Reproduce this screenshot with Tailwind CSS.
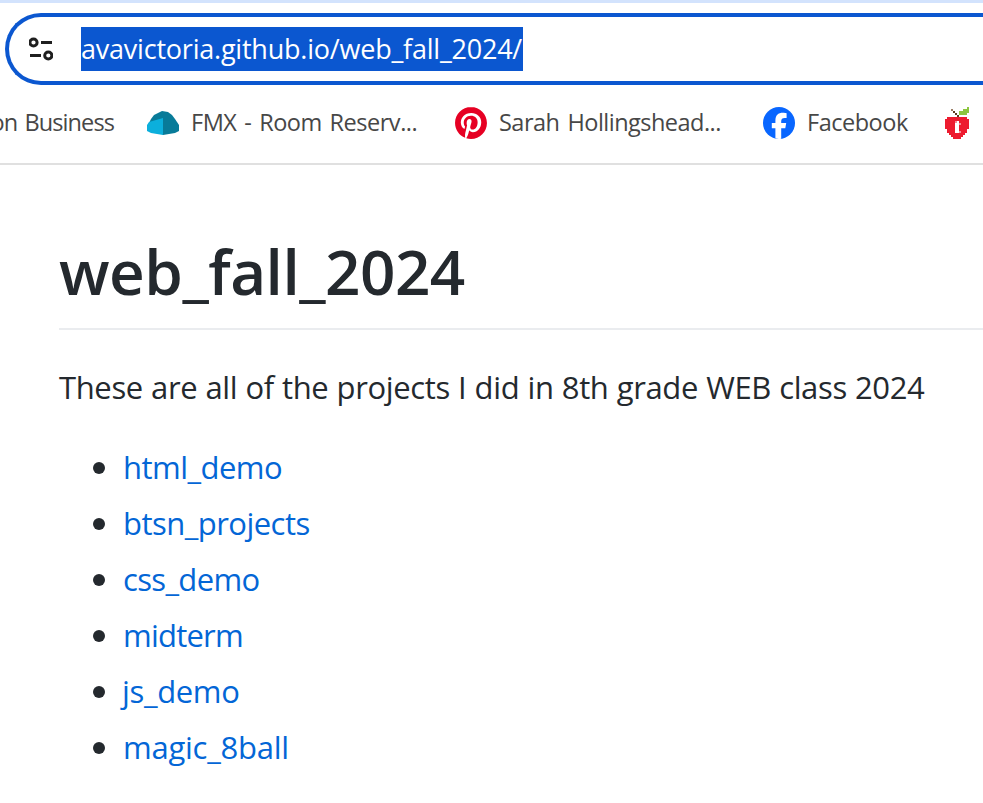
<!DOCTYPE html>
<html lang="en">
<head>
<meta charset="utf-8">
<title>web_fall_2024</title>
<script src="https://cdn.jsdelivr.net/npm/@tailwindcss/browser@4"></script>
</head>
<body class="h-[803px] overflow-hidden bg-white font-['Open_Sans','Noto_Sans',sans-serif] whitespace-nowrap">
<header class="flex h-[165px] flex-col border-b-2 border-[#e0e0e0]">
  <div class="h-[3px] shrink-0 bg-[#d3e3fd]"></div>
  <div class="mt-2.5 ml-[5px] flex h-[72px] shrink-0 items-center rounded-l-full border-4 border-r-0 border-[#0b57d0] pl-5">
    <svg class="size-6 shrink-0" viewBox="0 0 24 24" fill="none" stroke="#1f1f1f" stroke-width="3">
      <circle cx="4.5" cy="5.5" r="3.6"/><path d="M12 5.5h11M1 18.5h11"/><circle cx="19.3" cy="18.5" r="3.6"/>
    </svg>
    <span class="ml-7 h-11 w-[442px] bg-[#0b57d0] text-[27px] leading-[43px] tracking-[-0.22px] text-white">avavictoria.github.io/web_fall_2024/</span>
  </div>
  <nav class="mt-[22px] flex h-8 items-center text-[23.5px] leading-[30px] text-[#474747]">
    <div class="flex w-[114px] shrink-0 justify-end pb-0.5"><span class="tracking-[-0.9px] [word-spacing:2px]">on Business</span></div>
    <div class="ml-[33px] flex w-[308px] shrink-0 items-center gap-3">
      <svg class="size-8 shrink-0" viewBox="0 0 32 32">
        <path d="M2 16L4 12L7 8L11 6L15 4L21 5L25 8L28 12L30 15L32 18V24L28 26L16 28Z" fill="#087b99"/>
        <path d="M2 15L16 11V28L10 27L4 26L0 24V18Z" fill="#0cafdc"/>
      </svg>
      <span class="pb-0.5 tracking-[-0.48px] [word-spacing:2.2px]">FMX - Room Reserv...</span>
    </div>
    <div class="flex w-[308px] shrink-0 items-center gap-3">
      <svg class="size-8 shrink-0" viewBox="0 0 24 24"><circle cx="12" cy="12" r="11.5" fill="#fff"/><path fill="#e60023" d="M12.017 0C5.396 0 .029 5.367.029 11.987c0 5.079 3.158 9.417 7.618 11.162-.105-.949-.199-2.403.041-3.439.219-.937 1.406-5.957 1.406-5.957s-.359-.72-.359-1.781c0-1.663.967-2.911 2.168-2.911 1.024 0 1.518.769 1.518 1.688 0 1.029-.653 2.567-.992 3.992-.285 1.193.6 2.165 1.775 2.165 2.128 0 3.768-2.245 3.768-5.487 0-2.861-2.063-4.869-5.008-4.869-3.41 0-5.409 2.562-5.409 5.199 0 1.033.394 2.143.889 2.741.099.12.112.225.085.345-.09.375-.293 1.199-.334 1.363-.053.225-.172.271-.401.165-1.495-.69-2.433-2.878-2.433-4.646 0-3.776 2.748-7.252 7.92-7.252 4.158 0 7.392 2.967 7.392 6.923 0 4.135-2.607 7.462-6.233 7.462-1.214 0-2.354-.629-2.758-1.379l-.749 2.848c-.269 1.045-1.004 2.352-1.498 3.146 1.123.345 2.306.535 3.55.535 6.607 0 11.985-5.365 11.985-11.987C23.97 5.39 18.592.026 11.985.026L12.017 0z"/></svg>
      <span class="pb-0.5 tracking-[-0.52px] [word-spacing:2.5px]">Sarah Hollingshead...</span>
    </div>
    <div class="flex w-[178px] shrink-0 items-center gap-3">
      <svg class="size-8 shrink-0" viewBox="0 0 32 32"><circle cx="16" cy="16" r="16" fill="#0866ff"/><path fill="#fff" d="M12.4 31.5V21.2H8.8V16h3.6v-2.3c0-5.4 2.5-7.9 7.8-7.9 1 0 2.7.2 3.4.4v4.8c-.4 0-1-.1-1.8-.1-2.6 0-3.6 1-3.6 3.5V16h5l-.9 5.2h-4.1v10.5c-1.8.4-3.7.4-5.4-.2z"/></svg>
      <span class="pb-0.5 tracking-[-0.48px]">Facebook</span>
    </div>
    <svg class="size-8 shrink-0" viewBox="0 0 16 16" shape-rendering="crispEdges">
      <path fill="#ed1b2f" d="M3 5h10v1h1v5h-1v2h-1v1h-1v1h-1v1H6v-1H5v-1H4v-1H3v-2H2V6h1z"/>
      <path fill="#8cc63f" d="M13 0h1v3h-1v1H9V2h2V1h2z"/>
      <path fill="#5c3a1e" d="M6 2h1v1h1v1h1v1H8V4H7V3H6z"/><path fill="#9b7f68" d="M5 1h1v1H5z"/>
      <path fill="#fff" d="M7 7h2v6H7z"/><path fill="#f58c97" d="M9 8h1v1H9zM9 12h1v1H9zM7 7h1v1H7z"/>
    </svg>
  </nav>
</header>
<main class="pt-[66px] pl-[59px] text-[31px] leading-12 text-[#24292e]">
  <h1 class="h-[99px] border-b-2 border-[#eaecef] text-[62px] leading-20 font-semibold tracking-[-0.5px]">web_fall_2024</h1>
  <p class="mt-[33px] tracking-[-0.36px] [word-spacing:0.5px]">These are all of the projects I did in 8th grade WEB class 2024</p>
  <ul class="mt-8 flex flex-col gap-2 text-[#0366d6]">
    <li class="flex items-center pl-[34px]"><i class="mt-0.5 mr-[18px] size-3 rounded-full bg-[#24292e]"></i><a class="tracking-[-0.53px]">html_demo</a></li>
    <li class="flex items-center pl-[34px]"><i class="mt-0.5 mr-[18px] size-3 rounded-full bg-[#24292e]"></i><a class="tracking-[-0.53px]">btsn_projects</a></li>
    <li class="flex items-center pl-[34px]"><i class="mt-0.5 mr-[18px] size-3 rounded-full bg-[#24292e]"></i><a class="tracking-[-0.65px]">css_demo</a></li>
    <li class="flex items-center pl-[34px]"><i class="mt-0.5 mr-[18px] size-3 rounded-full bg-[#24292e]"></i><a class="tracking-[-0.78px]">midterm</a></li>
    <li class="flex items-center pl-[34px]"><i class="mt-0.5 mr-[18px] size-3 rounded-full bg-[#24292e]"></i><a class="-ml-px tracking-[-0.35px]">js_demo</a></li>
    <li class="flex items-center pl-[34px]"><i class="mt-0.5 mr-[18px] size-3 rounded-full bg-[#24292e]"></i><a class="tracking-[-0.25px]">magic_8ball</a></li>
  </ul>
</main>
</body>
</html>
